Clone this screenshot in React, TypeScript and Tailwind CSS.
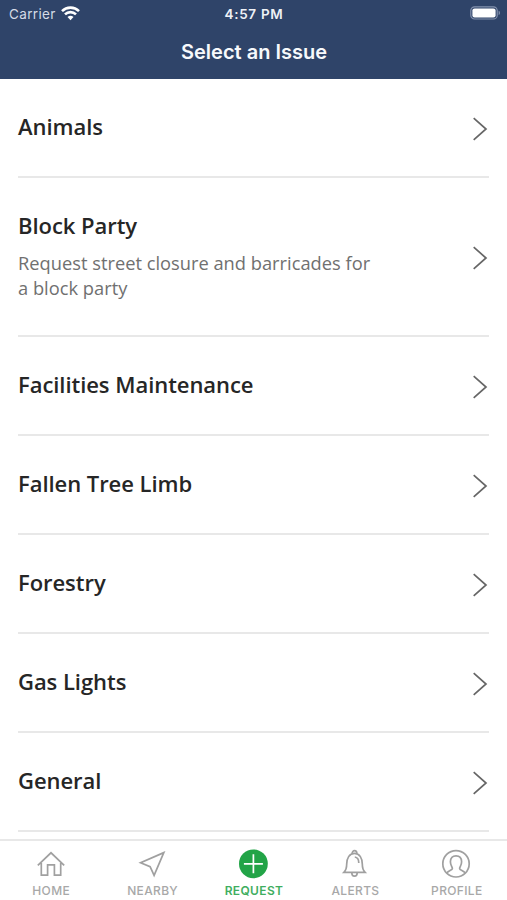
import type { ReactNode } from 'react';

interface Issue {
  title: string;
  description?: string;
}

const issues: Issue[] = [
  { title: 'Animals' },
  { title: 'Block Party', description: 'Request street closure and barricades for a block party' },
  { title: 'Facilities Maintenance' },
  { title: 'Fallen Tree Limb' },
  { title: 'Forestry' },
  { title: 'Gas Lights' },
  { title: 'General' },
];

function StatusBar() {
  return (
    <div className="grid h-7 grid-cols-3 items-center pl-[9px] pr-[6px] text-[13.5px] text-[#eef1f6]">
      <div className="flex items-center gap-[5px]">
        <span className="tracking-[0.35px] text-[#d5dbe6]">Carrier</span>
        {/* Wifi */}
        <svg className="-mt-[2px]" width="19" height="15" viewBox="0 0 19 15" fill="none" stroke="#fff" strokeWidth="2.6">
          <path d="M1 5.1a12.2 12.2 0 0 1 17 0" />
          <path d="M4 8.4a7.8 7.8 0 0 1 11 0" />
          <path d="M9.5 14.2 6.5 11.1a4.3 4.3 0 0 1 6 0z" fill="#fff" stroke="none" />
        </svg>
      </div>
      <span className="pr-[2px] text-center font-semibold tracking-[0.7px]">4:57 PM</span>
      {/* Battery */}
      <svg className="-mt-[2px] justify-self-end" width="31" height="14" viewBox="0 0 31 14">
        <rect x="0.8" y="0.8" width="26.4" height="12.2" rx="3.8" fill="none" stroke="#8492ae" strokeWidth="1.2" />
        <rect x="2.4" y="2.4" width="23.2" height="9" rx="2.2" fill="#fff" />
        <path d="M28.6 4.7c1.8.6 1.8 3.8 0 4.4z" fill="#8492ae" />
      </svg>
    </div>
  );
}

function IssueRow({ title, description }: Issue) {
  return (
    <li
      className={`flex shrink-0 items-center justify-between border-b-2 border-[#e8e8e8] ${description ? 'h-[159px]' : 'h-[99px]'}`}
    >
      <div className="w-[360px]">
        <h2 className="-mt-[3px] text-[22px] leading-[30px] font-semibold tracking-[-0.05px] text-[#262626]">{title}</h2>
        {description && (
          <p className="mt-[10px] text-[18.3px] leading-[25px] text-[#707070]">{description}</p>
        )}
      </div>
      <svg className="mt-[2px] mr-[1px] shrink-0" width="16" height="24" viewBox="0 0 16 24" fill="none" stroke="#666" strokeWidth="1.7">
        <path d="M1.7 1.2 14 12 1.7 22.8" />
      </svg>
    </li>
  );
}

interface TabProps {
  label: string;
  active?: boolean;
  children: ReactNode;
}

function Tab({ label, active, children }: TabProps) {
  return (
    <button
      type="button"
      className={`flex flex-1 flex-col items-center pt-[8px] text-[12px] ${active ? 'font-semibold text-[#3fae60]' : 'font-medium text-[#a8a8a8]'}`}
    >
      <svg width="32" height="32" viewBox="0 0 32 32" fill="none" stroke="#a0a0a0" strokeWidth="1.7">
        {children}
      </svg>
      <span className="mt-[2px] pl-px leading-4 tracking-[0.35px]">{label}</span>
    </button>
  );
}

export default function App() {
  return (
    <div className="flex h-[900px] w-full flex-col overflow-hidden bg-white font-['Inter',sans-serif]">
      <header className="h-[79px] shrink-0 bg-[#2f4469]">
        <StatusBar />
        <h1 className="mt-[9px] pl-px text-center text-[20px] leading-[30px] font-semibold text-[#f7f9fc]">
          Select an Issue
        </h1>
      </header>

      <ul className="flex min-h-0 flex-1 flex-col overflow-hidden px-[18px] font-['Open_Sans',sans-serif]">
        {issues.map((issue) => (
          <IssueRow key={issue.title} {...issue} />
        ))}
      </ul>

      <nav className="flex h-[61px] shrink-0 border-t-2 border-[#e8e8e8]">
        <Tab label="HOME">
          <path d="M2.8 16.4 16 3.8l13.2 12.6M6.3 14v12.2h6.3V15.8h6.8v10.4h6.3V14" />
        </Tab>
        <Tab label="NEARBY">
          <path d="M27.8 3.6 4.6 13.8l9.5 3.8 4 8.8z" />
        </Tab>
        <Tab label="REQUEST" active>
          <circle cx="15.4" cy="14.8" r="14.4" fill="#22a447" stroke="none" />
          <path d="M15.4 5.3v19M5.9 14.8h19" stroke="#fff" />
        </Tab>
        <Tab label="ALERTS">
          <path d="M4.9 23.4c2-2 2.8-4 2.8-8.4 0-5.6 2.6-10.6 7.800-10.600s7.800 5 7.800 10.600c0 4.400.8 6.400 2.800 8.400z" />
          <path d="M13.100 4.700c0-4 4.800-4 4.800 0M12.800 23.800c0 4.500 5.400 4.500 5.400 0M15.800 8c2.700.3 4 2.600 4 6" />
        </Tab>
        <Tab label="PROFILE">
          <circle cx="16" cy="14.800" r="13.200" />
          <path d="M6.800 24.200c1-2.700 5.600-2.800 5.600-4.800 0-1.400-2-3-2-6.600 0-4 2.200-6 5.600-6s5.600 2 5.600 6c0 3.600-2 5.200-2 6.600 0 2 4.600 2.100 5.600 4.800" />
        </Tab>
      </nav>
    </div>
  );
}
